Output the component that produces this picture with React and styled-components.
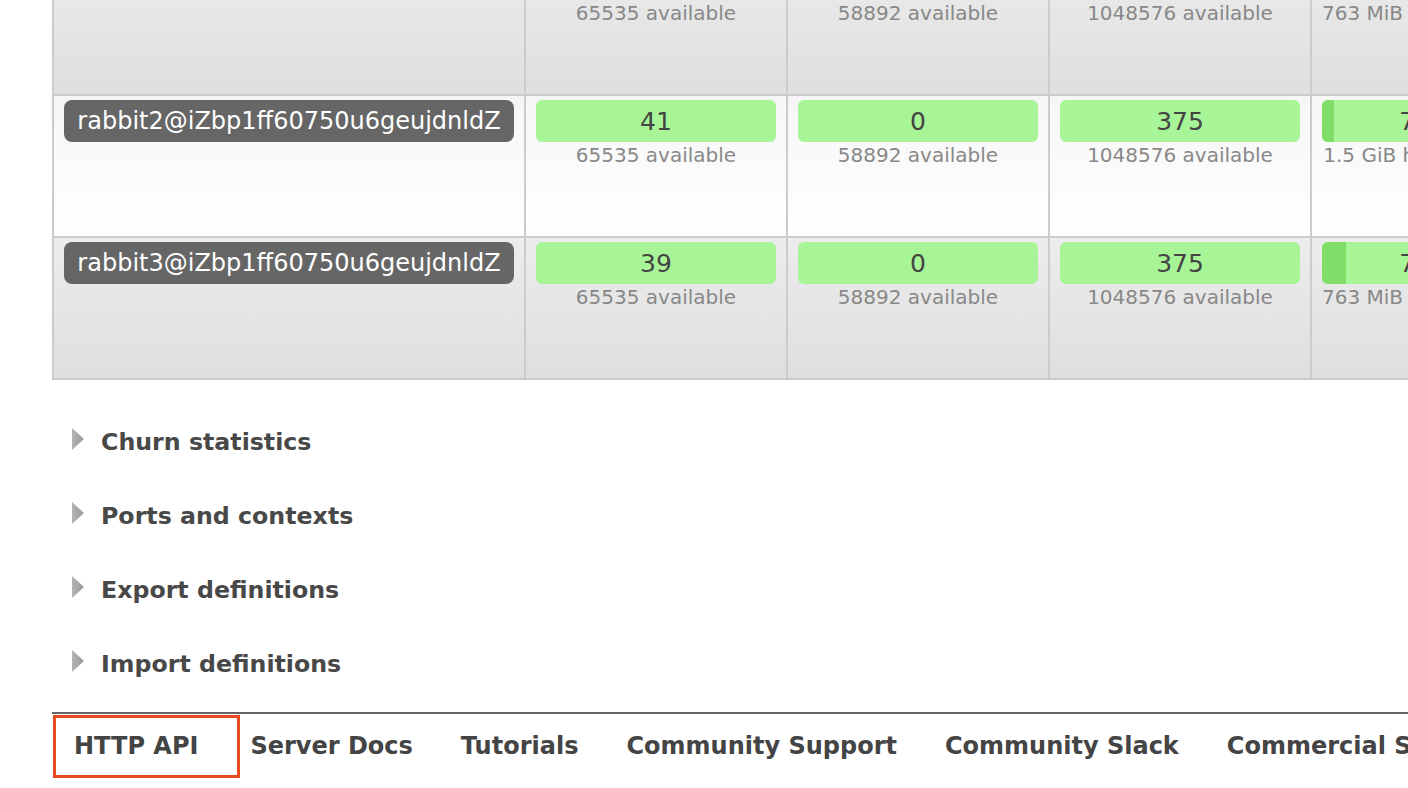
import React from "react";
import styled, { createGlobalStyle } from "styled-components";

const GlobalStyle = createGlobalStyle`
  html {
    overflow: hidden;
  }
  html, body {
    margin: 0;
    padding: 0;
    background: #ffffff;
  }
  body {
    font-family: "DejaVu Sans", Verdana, sans-serif;
    color: #444444;
  }
`;

const Main = styled.main`
  padding-left: 52px;
  padding-bottom: 40px;
  width: max-content;
`;

const NodeGrid = styled.div`
  display: grid;
  grid-template-columns: 472px repeat(4, 262px);
  border-left: 2px solid #cccccc;
  border-top: 2px solid #cccccc;
  margin-top: -48px;
  width: max-content;
`;

const Cell = styled.div`
  box-sizing: border-box;
  height: 142px;
  padding: 4px 10px;
  border-right: 2px solid #cccccc;
  border-bottom: 2px solid #cccccc;
  background: ${(p) =>
    p.$alt
      ? "linear-gradient(#f6f6f6, #ffffff)"
      : "linear-gradient(#ececec, #dfdfdf)"};
  text-align: center;
`;

const NodeBadge = styled.div`
  box-sizing: border-box;
  height: 42px;
  padding-top: 1px;
  line-height: 41px;
  border-radius: 8px;
  background: #666666;
  color: #ffffff;
  font-size: 24px;
  text-align: center;
  white-space: nowrap;
`;

const Bar = styled.div`
  position: relative;
  height: 42px;
  border-radius: 6px;
  background: #a8f597;
  overflow: hidden;
`;

const BarFill = styled.div`
  position: absolute;
  left: 0;
  top: 0;
  bottom: 0;
  background: #80de68;
`;

const BarLabel = styled.span`
  position: relative;
  display: block;
  padding-top: 1px;
  line-height: 41px;
  font-size: 25px;
  color: #444444;
  white-space: nowrap;
`;

const Sub = styled.div`
  margin-top: 1px;
  font-size: 20px;
  color: #888888;
  white-space: nowrap;
`;

const Sections = styled.div`
  display: flex;
  flex-direction: column;
  gap: 44.9px;
  margin-top: 48.2px;
`;

const SectionHeading = styled.h2`
  display: flex;
  align-items: flex-start;
  gap: 17px;
  margin: 0;
  padding-left: 20px;
  font-size: 23.7px;
  line-height: 29px;
  font-weight: bold;
  color: #484848;
`;

const Arrow = styled.svg`
  flex: none;
  display: block;
  width: 12px;
  height: 22px;
`;

const Footer = styled.footer`
  margin-top: 33px;
  border-top: 2px solid #666666;
  padding-top: 1px;
  width: 1356px;
`;

const FooterNav = styled.ul`
  display: flex;
  gap: 48px;
  margin: 0;
  padding: 17px 0 20px 22px;
  list-style: none;
`;

const FooterItem = styled.li`
  position: relative;
  flex: none;
  margin-right: ${(p) => (p.$focused ? "4px" : "0")};
`;

const FooterLink = styled.a`
  font-size: 24px;
  line-height: 29px;
  font-weight: bold;
  color: #444444;
  text-decoration: none;
  white-space: nowrap;
`;

const FocusRing = styled.span`
  position: absolute;
  left: -21px;
  right: -42px;
  top: -17px;
  bottom: -17px;
  border: 3px solid #e8491d;
  pointer-events: none;
`;

const rows = [
  {
    node: "rabbit1@iZbp1ff60750u6geujdnldZ",
    fd: 43,
    sockets: 0,
    procs: 375,
    mem: "80 MiB",
    memPct: 10,
    memLimit: "763 MiB high watermark",
  },
  {
    node: "rabbit2@iZbp1ff60750u6geujdnldZ",
    fd: 41,
    sockets: 0,
    procs: 375,
    mem: "77 MiB",
    memPct: 5,
    memLimit: "1.5 GiB high watermark",
  },
  {
    node: "rabbit3@iZbp1ff60750u6geujdnldZ",
    fd: 39,
    sockets: 0,
    procs: 375,
    mem: "76 MiB",
    memPct: 10,
    memLimit: "763 MiB high watermark",
  },
];

const sections = [
  "Churn statistics",
  "Ports and contexts",
  "Export definitions",
  "Import definitions",
];

const links = [
  "HTTP API",
  "Server Docs",
  "Tutorials",
  "Community Support",
  "Community Slack",
  "Commercial Support",
  "Plugins",
  "GitHub",
  "Changelog",
];

function Meter({ label, sub, pct = 0 }) {
  return (
    <>
      <Bar>
        {pct > 0 && <BarFill style={{ width: `${pct}%` }} />}
        <BarLabel>{label}</BarLabel>
      </Bar>
      <Sub>{sub}</Sub>
    </>
  );
}

function TriangleIcon() {
  return (
    <Arrow viewBox="0 0 12 22" aria-hidden="true">
      <defs>
        <linearGradient id="tri" x1="0" y1="0" x2="1" y2="0">
          <stop offset="0" stopColor="#b4b4b4" />
          <stop offset="1" stopColor="#9a9a9a" />
        </linearGradient>
      </defs>
      <polygon points="0,0 12,11 0,22" fill="url(#tri)" />
    </Arrow>
  );
}

export default function App() {
  return (
    <>
      <GlobalStyle />
      <Main>
        <NodeGrid>
          {rows.map((r, i) => {
            const alt = i % 2 === 1;
            return (
              <React.Fragment key={r.node}>
                <Cell $alt={alt}>
                  <NodeBadge>{r.node}</NodeBadge>
                </Cell>
                <Cell $alt={alt}>
                  <Meter label={r.fd} sub="65535 available" />
                </Cell>
                <Cell $alt={alt}>
                  <Meter label={r.sockets} sub="58892 available" />
                </Cell>
                <Cell $alt={alt}>
                  <Meter label={r.procs} sub="1048576 available" />
                </Cell>
                <Cell $alt={alt}>
                  <Meter label={r.mem} sub={r.memLimit} pct={r.memPct} />
                </Cell>
              </React.Fragment>
            );
          })}
        </NodeGrid>

        <Sections>
          {sections.map((s) => (
            <SectionHeading key={s}>
              <TriangleIcon />
              <span>{s}</span>
            </SectionHeading>
          ))}
        </Sections>

        <Footer>
          <FooterNav>
            {links.map((l, i) => (
              <FooterItem key={l} $focused={i === 0}>
                {i === 0 && <FocusRing />}
                <FooterLink href="#">{l}</FooterLink>
              </FooterItem>
            ))}
          </FooterNav>
        </Footer>
      </Main>
    </>
  );
}
